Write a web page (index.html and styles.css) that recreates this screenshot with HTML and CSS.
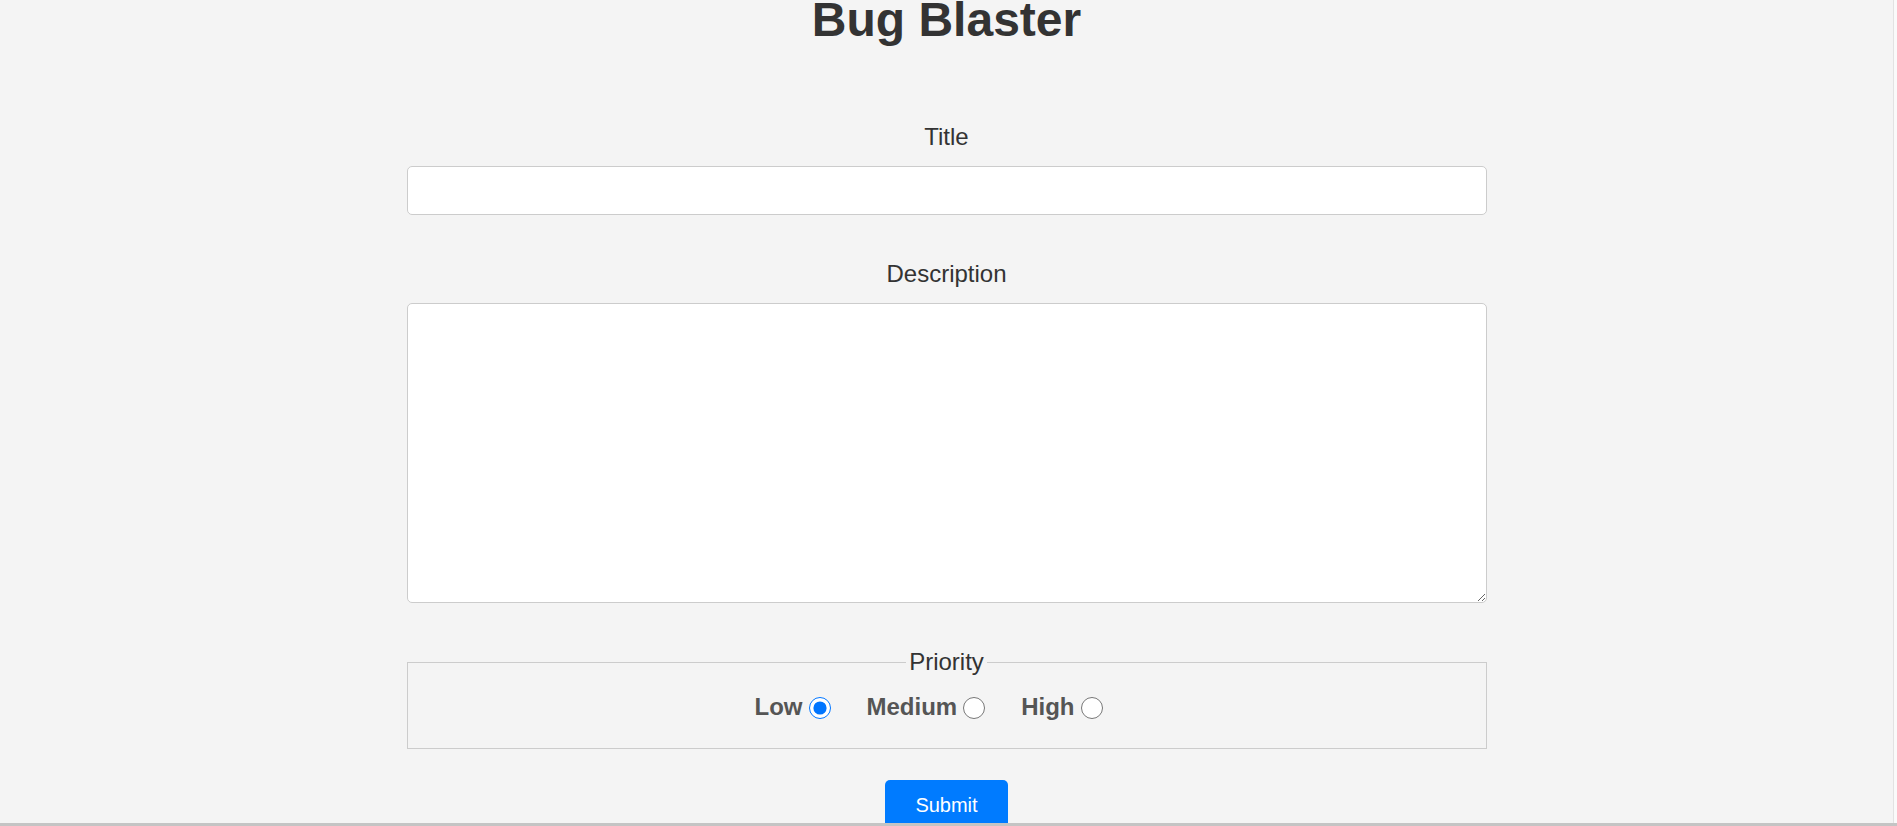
FILE: index.html
```html
<!DOCTYPE html>
<html lang="en">
<head>
<meta charset="utf-8">
<title>Bug Blaster</title>
<link rel="stylesheet" href="styles.css">
</head>
<body>
<div class="viewport">
  <div class="page">
    <div class="container">
      <h1 class="app-title">Bug Blaster</h1>
      <form class="bug-form">
        <div class="form-group">
          <label class="field-label" for="title">Title</label>
          <input class="text-input" type="text" id="title">
        </div>
        <div class="form-group">
          <label class="field-label" for="description">Description</label>
          <textarea class="text-area" id="description"></textarea>
        </div>
        <fieldset class="priority">
          <legend class="priority-legend">Priority</legend>
          <div class="options">
            <label class="option">Low <input class="radio" type="radio" name="priority" value="low" checked></label>
            <label class="option">Medium <input class="radio" type="radio" name="priority" value="medium"></label>
            <label class="option">High <input class="radio" type="radio" name="priority" value="high"></label>
          </div>
        </fieldset>
        <button class="submit-btn" type="submit">Submit</button>
      </form>
    </div>
  </div>
</div>
</body>
</html>
```

FILE: styles.css
```css
html, body {
  margin: 0;
  padding: 0;
  background: #fafafa;
  overflow: hidden;
}

body {
  font-family: "Liberation Sans", Arial, sans-serif;
  color: #333;
}

.viewport {
  height: 823px;
  border-bottom: 3px solid #c4c4c4;
  overflow: hidden;
}

.page {
  width: 1894px;
  height: 100%;
  background: #f4f4f4;
  border-right: 1px solid #e2e2e2;
  box-sizing: border-box;
}

.container {
  width: 1080px;
  margin: 0 auto;
  text-align: center;
}

.app-title {
  margin: 0 0 83px;
  font-size: 48px;
  line-height: 40px;
  font-weight: bold;
  color: #333;
}

.bug-form {
  display: flex;
  flex-direction: column;
  align-items: center;
}

.form-group {
  width: 100%;
  margin-bottom: 45px;
}

.field-label {
  display: block;
  font-size: 24px;
  line-height: normal;
  margin-bottom: 15px;
  color: #333;
}

.text-input,
.text-area {
  display: block;
  width: 100%;
  box-sizing: border-box;
  border: 1px solid #ccc;
  border-radius: 5px;
  background: #fff;
  font-family: "Liberation Sans", Arial, sans-serif;
  font-size: 16px;
  margin: 0;
}

.text-input {
  height: 49px;
  padding: 0 12px;
}

.text-area {
  height: 300px;
  padding: 10px 12px;
  resize: vertical;
}

.priority {
  width: 100%;
  box-sizing: border-box;
  margin: 0 0 31px;
  padding: 17px 0 27px;
  border: 1px solid #ccc;
  min-width: 0;
}

.priority-legend {
  font-size: 24px;
  line-height: normal;
  padding: 0 3px;
  color: #333;
}

.options {
  display: flex;
  justify-content: center;
  align-items: center;
  height: 28px;
}

.option {
  display: inline-flex;
  align-items: center;
  gap: 6px;
  margin-right: 36px;
  font-size: 24px;
  font-weight: bold;
  color: #555;
}

.radio {
  width: 22px;
  height: 22px;
  margin: 2px 0 0;
}

.submit-btn {
  flex: none;
  padding: 14px 30px;
  border: none;
  border-radius: 5px;
  background: #007bff;
  color: #fff;
  font-family: "Liberation Sans", Arial, sans-serif;
  font-size: 20px;
  line-height: normal;
  cursor: pointer;
}
```
